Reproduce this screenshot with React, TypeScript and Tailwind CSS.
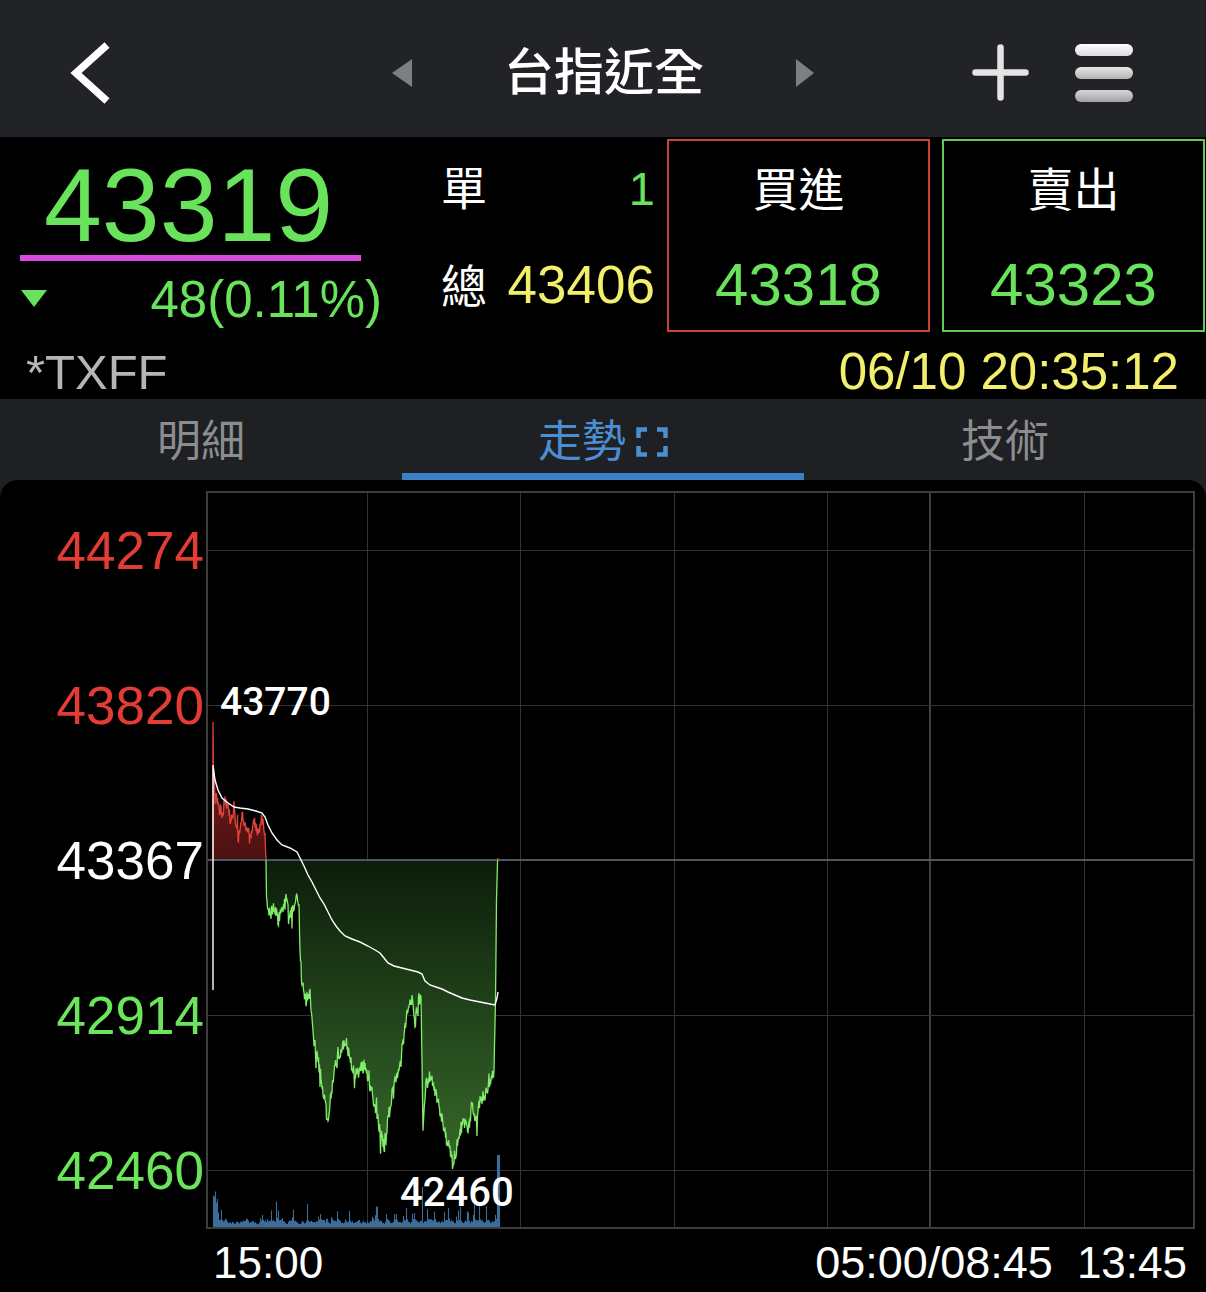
import React from 'react';

const W = 989;
const H = 738;
const BASE = 369; // y of 43367 in frame coords

function mulberry32(a: number) {
  return function () {
    a |= 0;
    a = (a + 0x6d2b79f5) | 0;
    let t = Math.imul(a ^ (a >>> 15), 1 | a);
    t = (t + Math.imul(t ^ (t >>> 7), 61 | t)) ^ t;
    return ((t ^ (t >>> 14)) >>> 0) / 4294967296;
  };
}

const KP: [number, number][] = [
  [213.5, 770], [215, 790], [218, 805], [222, 812], [226, 800], [230, 818], [234, 808], [238, 835],
  [242, 812], [246, 826], [250, 840], [254, 820], [258, 830], [262, 818], [265, 828],
  [266, 862], [266.5, 900], [270, 915], [274, 905], [278, 920], [282, 912], [286, 900], [290, 918],
  [294, 905], [297, 895], [299, 905], [300, 950], [302, 985], [306, 1000], [310, 995], [314, 1040],
  [318, 1060], [322, 1085], [326, 1110], [328, 1125], [331, 1095], [334, 1070], [338, 1060], [342, 1045],
  [346, 1040], [350, 1060], [355, 1075], [360, 1070], [365, 1065], [370, 1085], [374, 1100], [378, 1120],
  [382, 1140], [385, 1148], [388, 1120], [392, 1095], [396, 1080], [400, 1060], [404, 1035], [408, 1010],
  [412, 1000], [415, 1025], [418, 1000], [421, 995], [422, 1060], [423, 1125], [426, 1085], [430, 1075],
  [434, 1090], [438, 1100], [442, 1120], [446, 1135], [450, 1150], [453, 1165], [456, 1150], [460, 1130],
  [464, 1120], [468, 1135], [472, 1105], [476, 1120], [480, 1100], [484, 1095], [488, 1090], [492, 1080],
  [494, 1070], [495.5, 1000], [496.5, 900], [497.5, 862], [498, 858],
];

function interp(kp: [number, number][], x: number) {
  if (x <= kp[0][0]) return kp[0][1];
  for (let i = 0; i < kp.length - 1; i++) {
    const [x0, y0] = kp[i];
    const [x1, y1] = kp[i + 1];
    if (x >= x0 && x <= x1) {
      const t = x1 === x0 ? 0 : (x - x0) / (x1 - x0);
      return y0 + (y1 - y0) * t;
    }
  }
  return kp[kp.length - 1][1];
}

function buildPrice() {
  const r = mulberry32(7);
  const pts: [number, number][] = [];
  pts.push([213 - 206, 860 - 491]);
  pts.push([213 - 206, 722 - 491]);
  for (let x = 213.5; x <= 498; x += 0.5) {
    let y = interp(KP, x);
    if (x > 214.5 && x < 495) {
      y += (r() - 0.5) * 14;
      if (r() < 0.07) y += (r() - 0.4) * 36;
      if (x < 265.5) y = Math.min(y, 856);
      else if (x > 267) y = Math.max(y, 866);
    }
    pts.push([x - 206, y - 491]);
  }
  return pts;
}

const AVG: [number, number][] = [
  [213, 990], [213, 765], [215, 780], [218, 790], [222, 798], [228, 803], [234, 807], [240, 808], [248, 809],
  [256, 811], [262, 813], [265, 817], [268, 825], [272, 833], [277, 840], [282, 845], [290, 848], [297, 852],
  [300, 858], [304, 866], [308, 875], [312, 882], [316, 890], [320, 898], [324, 904], [328, 912], [332, 920],
  [336, 926], [340, 931], [345, 936], [352, 939], [360, 942], [368, 946], [375, 950], [380, 953], [384, 958],
  [388, 963], [394, 966], [402, 968], [410, 970], [418, 972], [422, 974], [425, 981], [430, 985], [436, 987],
  [442, 989], [448, 992], [455, 995], [462, 998], [470, 1000], [480, 1002], [490, 1004], [495, 1005],
  [497, 998], [498, 992],
];

function buildVol() {
  const r = mulberry32(11);
  let d = '';
  let prev = 4;
  for (let x = 213; x <= 499; x += 1) {
    let h = prev * 0.5 + (2 + r() * 6) * 0.5;
    if (r() < 0.14) h += r() * 16;
    if (r() < 0.04) h += r() * 20;
    prev = Math.min(h, 10);
    if (x < 218) h = 22 + r() * 16;
    if (x === 422) h = 40;
    if (x >= 497) h = 72;
    d += `M${x - 206 + 0.5},${H - 2}v${(-h).toFixed(1)}`;
  }
  return d;
}

const price = buildPrice();
const linePath = 'M' + price.map((p) => `${p[0].toFixed(1)},${p[1].toFixed(1)}`).join('L');
const areaPath =
  `M${price[0][0]},${BASE}L` +
  price.map((p) => `${p[0].toFixed(1)},${p[1].toFixed(1)}`).join('L') +
  `L${price[price.length - 1][0]},${BASE}Z`;
const avgPath = 'M' + AVG.map((p) => `${p[0] - 206},${p[1] - 491}`).join('L');
const volPath = buildVol();

const GREEN = '#69e35c';

function Chart() {
  const vx = [161, 314, 468, 621, 878];
  const hy = [59, 214, 524, 679];
  return (
    <svg width={W} height={H} className="block">
      <defs>
        <linearGradient id="gfill" x1="0" y1={BASE} x2="0" y2="679" gradientUnits="userSpaceOnUse">
          <stop offset="0" stopColor="#0c1d0a" />
          <stop offset="1" stopColor="#376a2b" />
        </linearGradient>
        <linearGradient id="rfill" x1="0" y1="231" x2="0" y2={BASE} gradientUnits="userSpaceOnUse">
          <stop offset="0" stopColor="#8a2222" />
          <stop offset="1" stopColor="#4a1010" />
        </linearGradient>
        <clipPath id="above">
          <rect x="0" y="0" width={W} height={BASE} />
        </clipPath>
        <clipPath id="below">
          <rect x="0" y={BASE} width={W} height={H - BASE} />
        </clipPath>
      </defs>
      {vx.map((x) => (
        <line key={x} x1={x + 0.5} y1={0} x2={x + 0.5} y2={H} stroke="#333333" strokeWidth={1} />
      ))}
      <line x1={724} y1={0} x2={724} y2={H} stroke="#404040" strokeWidth={2} />
      {hy.map((y) => (
        <line key={y} x1={0} y1={y + 0.5} x2={W} y2={y + 0.5} stroke="#333333" strokeWidth={1} />
      ))}
      <path d={volPath} stroke="#3a6d9a" strokeWidth={1.1} fill="none" />
      <path d={areaPath} fill="url(#rfill)" clipPath="url(#above)" />
      <path d={areaPath} fill="url(#gfill)" clipPath="url(#below)" />
      <line x1={0} y1={BASE} x2={W} y2={BASE} stroke="#4d5863" strokeWidth={2} />
      <path d={linePath} fill="none" stroke="#e0433c" strokeWidth={1.3} clipPath="url(#above)" />
      <path d={linePath} fill="none" stroke="#82ec6c" strokeWidth={1.3} clipPath="url(#below)" />
      <path d={avgPath} fill="none" stroke="#ffffff" strokeWidth={1.4} />
      <rect x={1} y={1} width={W - 2} height={H - 2} fill="none" stroke="#3d3d3d" strokeWidth={2} />
    </svg>
  );
}

export default function App() {
  return (
    <div className="w-[1206px] h-[1292px] bg-black overflow-hidden flex flex-col font-['Liberation_Sans','Noto_Sans_CJK_TC',sans-serif]">
      {/* Header */}
      <div className="h-[137px] shrink-0 bg-[#222327] flex items-center pt-[8px]">
        <svg className="ml-[70px] shrink-0" width="40" height="62" viewBox="0 0 40 62">
          <polyline points="37,3 6,31 37,59" fill="none" stroke="#ffffff" strokeWidth="7.5" />
        </svg>
        <svg className="ml-[282px] shrink-0" width="20" height="28" viewBox="0 0 20 28">
          <polygon points="20,0 0,14 20,28" fill="#7c7f84" />
        </svg>
        <div className="w-[384px] shrink-0 text-center text-[50px] leading-[50px] font-medium text-white">
          台指近全
        </div>
        <svg className="shrink-0" width="18" height="28" viewBox="0 0 18 28">
          <polygon points="0,0 18,14 0,28" fill="#7c7f84" />
        </svg>
        <svg className="ml-[158px] shrink-0" width="57" height="57" viewBox="0 0 57 57">
          <path d="M3.5,28.5H53.5M28.5,3.5V53.5" stroke="#e4e4e4" strokeWidth="6.5" strokeLinecap="round" />
        </svg>
        <div className="ml-[46px] w-[58px] flex flex-col gap-[11px]">
          <div className="h-[12px] rounded-full bg-linear-to-b from-[#ffffff] to-[#dcdcdc]" />
          <div className="h-[12px] rounded-full bg-linear-to-b from-[#e8e8e8] to-[#b4b4b4]" />
          <div className="h-[12px] rounded-full bg-linear-to-b from-[#d8d8d8] to-[#a2a2a2]" />
        </div>
      </div>

      {/* Quote */}
      <div className="h-[262px] shrink-0 bg-black flex flex-col">
        <div className="h-[195px] flex">
          <div className="w-[392px] shrink-0 flex flex-col">
            <div className="mt-[18px] pl-[44px] h-[100px] text-[104px] leading-[100px] text-[#69e35c]">43319</div>
            <div className="ml-[20px] w-[341px] h-[6px] bg-[#d84ae0]" />
            <div className="mt-[13px] flex justify-between items-start pl-[21px] pr-[10px]">
              <svg className="mt-[16px]" width="26" height="17" viewBox="0 0 26 17">
                <polygon points="0,0 26,0 13,17" fill={GREEN} />
              </svg>
              <span className="text-[51px] leading-[51px] text-[#69e35c]">48(0.11%)</span>
            </div>
          </div>
          <div className="w-[275px] shrink-0 flex flex-col pl-[49px] pr-[12px]">
            <div className="mt-[29px] flex justify-between items-baseline leading-[46px]">
              <span className="text-[46px] text-white">單</span>
              <span className="text-[47px] text-[#69e35c]">1</span>
            </div>
            <div className="mt-[47px] flex justify-between items-baseline leading-[52px]">
              <span className="text-[46px] text-white">總</span>
              <span className="text-[53px] text-[#f1ef6c]">43406</span>
            </div>
          </div>
          <div className="w-[263px] h-[193px] mt-[2px] shrink-0 border-2 border-[#cc403b] flex flex-col items-center">
            <div className="mt-[26px] text-[46px] leading-[46px] text-white">買進</div>
            <div className="mt-[42px] text-[60px] leading-[60px] text-[#69e35c]">43318</div>
          </div>
          <div className="ml-[12px] w-[263px] h-[193px] mt-[2px] shrink-0 border-2 border-[#62c955] flex flex-col items-center">
            <div className="mt-[26px] text-[46px] leading-[46px] text-white">賣出</div>
            <div className="mt-[42px] text-[60px] leading-[60px] text-[#69e35c]">43323</div>
          </div>
        </div>
        <div className="h-[67px] flex justify-between items-baseline pt-[14px] pl-[26px] pr-[27px] leading-[51px]">
          <span className="text-[49px] text-[#b5b5b5]">*TXFF</span>
          <span className="text-[51px] text-[#f1ef6c]">06/10 20:35:12</span>
        </div>
      </div>

      {/* Tabs */}
      <div className="h-[81px] shrink-0 bg-[#1f2023] flex">
        <div className="w-[402px] flex flex-col items-center">
          <div className="pt-[21px] text-[44px] leading-[44px] text-[#8c8d8f]">明細</div>
        </div>
        <div className="w-[402px] flex flex-col items-center">
          <div className="pt-[21px] flex items-center">
            <span className="text-[44px] leading-[44px] text-[#4b8fd2]">走勢</span>
            <svg className="ml-[10px]" width="32" height="30" viewBox="0 0 32 30">
              <path
                d="M2.5,11V2.5H11M21,2.5H29.5V11M2.5,19V27.5H11M21,27.5H29.5V19"
                fill="none"
                stroke="#4b8fd2"
                strokeWidth="4.5"
              />
            </svg>
          </div>
          <div className="mt-auto w-full h-[7px] bg-[#3d7fc4]" />
        </div>
        <div className="w-[402px] flex flex-col items-center">
          <div className="pt-[21px] text-[44px] leading-[44px] text-[#8c8d8f]">技術</div>
        </div>
      </div>

      {/* Chart panel */}
      <div className="flex-1 bg-[#1f2023]">
        <div className="h-full bg-black rounded-t-[18px] flex flex-col">
          <div className="flex pt-[11px]">
            <div className="w-[206px] h-[738px] shrink-0 flex flex-col items-end pr-[2px] -mt-[18px] text-[53px] leading-[155px]">
              <span className="shrink-0 text-[#e23c35]">44274</span>
              <span className="shrink-0 text-[#e23c35]">43820</span>
              <span className="shrink-0 text-white">43367</span>
              <span className="shrink-0 text-[#6be65b]">42914</span>
              <span className="shrink-0 text-[#6be65b]">42460</span>
            </div>
            <div className="relative w-[989px] h-[738px] shrink-0">
              <Chart />
              <span className="absolute left-[14px] top-[192px] font-['Roboto',sans-serif] font-medium text-[39px] leading-[39px] text-white">
                43770
              </span>
              <span className="absolute left-[194px] top-[682px] font-['Roboto',sans-serif] font-medium text-[40px] leading-[40px] text-white">
                42460
              </span>
            </div>
          </div>
          <div className="flex items-baseline pl-[213px] pr-[19px] pt-[12px] text-[44px] leading-[44px] text-white">
            <span>15:00</span>
            <span className="ml-auto text-[45px]">05:00/08:45</span>
            <span className="ml-[24px]">13:45</span>
          </div>
        </div>
      </div>
    </div>
  );
}
